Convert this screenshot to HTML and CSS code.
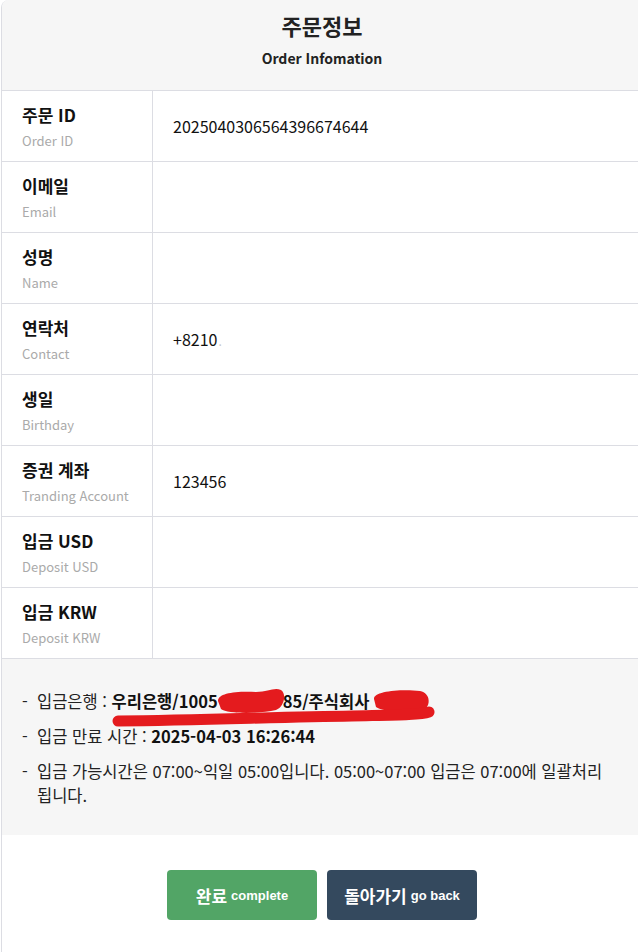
FILE: index.html
```html
<!DOCTYPE html>
<html lang="ko">
<head>
<meta charset="utf-8">
<title>주문정보</title>
<link rel="stylesheet" href="styles.css">
</head>
<body>
<div class="page">
  <div class="card">
    <div class="card-head">
      <h1 class="title">주문정보</h1>
      <p class="subtitle">Order Infomation</p>
    </div>
    <div class="rows">
      <div class="row">
        <div class="label"><span class="ko">주문 ID</span><span class="en">Order ID</span></div>
        <div class="value">2025040306564396674644</div>
      </div>
      <div class="row">
        <div class="label"><span class="ko">이메일</span><span class="en">Email</span></div>
        <div class="value"></div>
      </div>
      <div class="row">
        <div class="label"><span class="ko">성명</span><span class="en">Name</span></div>
        <div class="value"></div>
      </div>
      <div class="row">
        <div class="label"><span class="ko">연락처</span><span class="en">Contact</span></div>
        <div class="value">+8210<span class="dot">.</span></div>
      </div>
      <div class="row">
        <div class="label"><span class="ko">생일</span><span class="en">Birthday</span></div>
        <div class="value"></div>
      </div>
      <div class="row">
        <div class="label"><span class="ko">증권 계좌</span><span class="en">Tranding Account</span></div>
        <div class="value">123456</div>
      </div>
      <div class="row">
        <div class="label"><span class="ko">입금 USD</span><span class="en">Deposit USD</span></div>
        <div class="value"></div>
      </div>
      <div class="row">
        <div class="label"><span class="ko">입금 KRW</span><span class="en">Deposit KRW</span></div>
        <div class="value"></div>
      </div>
    </div>
    <ul class="info">
      <li class="bank">입금은행 : <b>우리은행/1005<span class="gap1"></span>85/주식회사<span class="gap2"></span></b>
        <svg class="redact" width="430" height="50" viewBox="0 0 430 50" aria-hidden="true">
          <path d="M196 22 C196 14 214 12 234 13 C246 13 252 8 259 11 C265 15 262 28 254 31 C236 35 206 35 199 30 Z" fill="#e41b1e"/>
          <path d="M352 20 C351 12 380 10 398 12 C409 14 409 28 401 31 C386 34 360 33 354 28 Z" fill="#e41b1e"/>
          <path d="M96 42 C180 41 260 38 330 37 C370 36 398 36 407 33" stroke="#e41b1e" stroke-width="11" stroke-linecap="round" fill="none"/>
        </svg>
      </li>
      <li>입금 만료 시간 : <b>2025-04-03 16:26:44</b></li>
      <li>입금 가능시간은 07:00~익일 05:00입니다. 05:00~07:00 입금은 07:00에 일괄처리 됩니다.</li>
    </ul>
    <div class="actions">
      <button class="btn btn-ok" type="button"><span class="btn-ko">완료</span> <span class="btn-en">complete</span></button>
      <button class="btn btn-back" type="button"><span class="btn-ko">돌아가기</span> <span class="btn-en">go back</span></button>
    </div>
  </div>
</div>
</body>
</html>
```

FILE: styles.css
```css
* { box-sizing: border-box; }
html, body {
  margin: 0;
  padding: 0;
  background: #ffffff;
  overflow-x: hidden;
}
body {
  font-family: "Noto Sans CJK KR", "Noto Sans", sans-serif;
  color: #111111;
}
.page {
  padding-left: 1px;
}
.card {
  width: 641px;
  border-left: 1px solid #dcdde3;
  border-top-left-radius: 8px;
  overflow: hidden;
  min-height: 952px;
  background: #ffffff;
}
.card-head {
  background: #f6f6f6;
  border-bottom: 1px solid #dcdde3;
  height: 91px;
  text-align: center;
  padding-top: 8px;
}
.title {
  margin: 0;
  font-size: 22px;
  font-weight: 700;
  line-height: 34px;
  color: #222222;
}
.subtitle {
  margin: 5px 0 0;
  font-size: 14px;
  font-weight: 700;
  line-height: 22px;
  color: #222222;
}
.row {
  display: grid;
  grid-template-columns: 151px 1fr;
  height: 71px;
  border-bottom: 1px solid #dcdde3;
}
.label {
  border-right: 1px solid #dcdde3;
  padding: 11px 0 0 20px;
  display: flex;
  flex-direction: column;
}
.ko {
  font-size: 17px;
  font-weight: 700;
  line-height: 26px;
  color: #111111;
}
.en {
  font-size: 13px;
  line-height: 22px;
  margin-top: 2px;
  color: #aaaaaa;
}
.value {
  display: flex;
  align-items: center;
  padding-left: 20px;
  font-size: 16px;
  color: #111111;
}
.dot {
  color: #c8c8c8;
  font-size: 12px;
  margin-left: 1px;
  padding-top: 3px;
}
.info {
  list-style: none;
  margin: 0;
  background: #f6f6f6;
  padding: 30px 18px 24px 20px;
  height: 176px;
}
.info li {
  position: relative;
  padding-left: 15px;
  font-size: 16.5px;
  line-height: 24px;
  color: #222222;
  margin-bottom: 11px;
  word-break: keep-all;
}
.info li::before {
  content: "-";
  position: absolute;
  left: 0;
  top: 0;
}
.info b {
  font-weight: 700;
  color: #111111;
}
.gap1 { display: inline-block; width: 65px; }
.gap2 { display: inline-block; width: 52px; }
.redact {
  position: absolute;
  left: 0;
  top: -10px;
  pointer-events: none;
}
.actions {
  display: flex;
  justify-content: center;
  gap: 10px;
  padding-top: 35px;
}
.btn {
  width: 150px;
  height: 50px;
  border: none;
  border-radius: 4px;
  color: #ffffff;
  font-family: "Liberation Sans", "Noto Sans CJK KR", sans-serif;
  font-weight: 700;
  cursor: pointer;
  display: flex;
  align-items: center;
  justify-content: center;
  gap: 4px;
}
.btn-ko {
  font-size: 17px;
  font-family: "Noto Sans CJK KR", sans-serif;
  font-weight: 700;
}
.btn-en {
  font-size: 13px;
}
.btn-ok { background: #52a566; }
.btn-back { background: #34495e; }
```
